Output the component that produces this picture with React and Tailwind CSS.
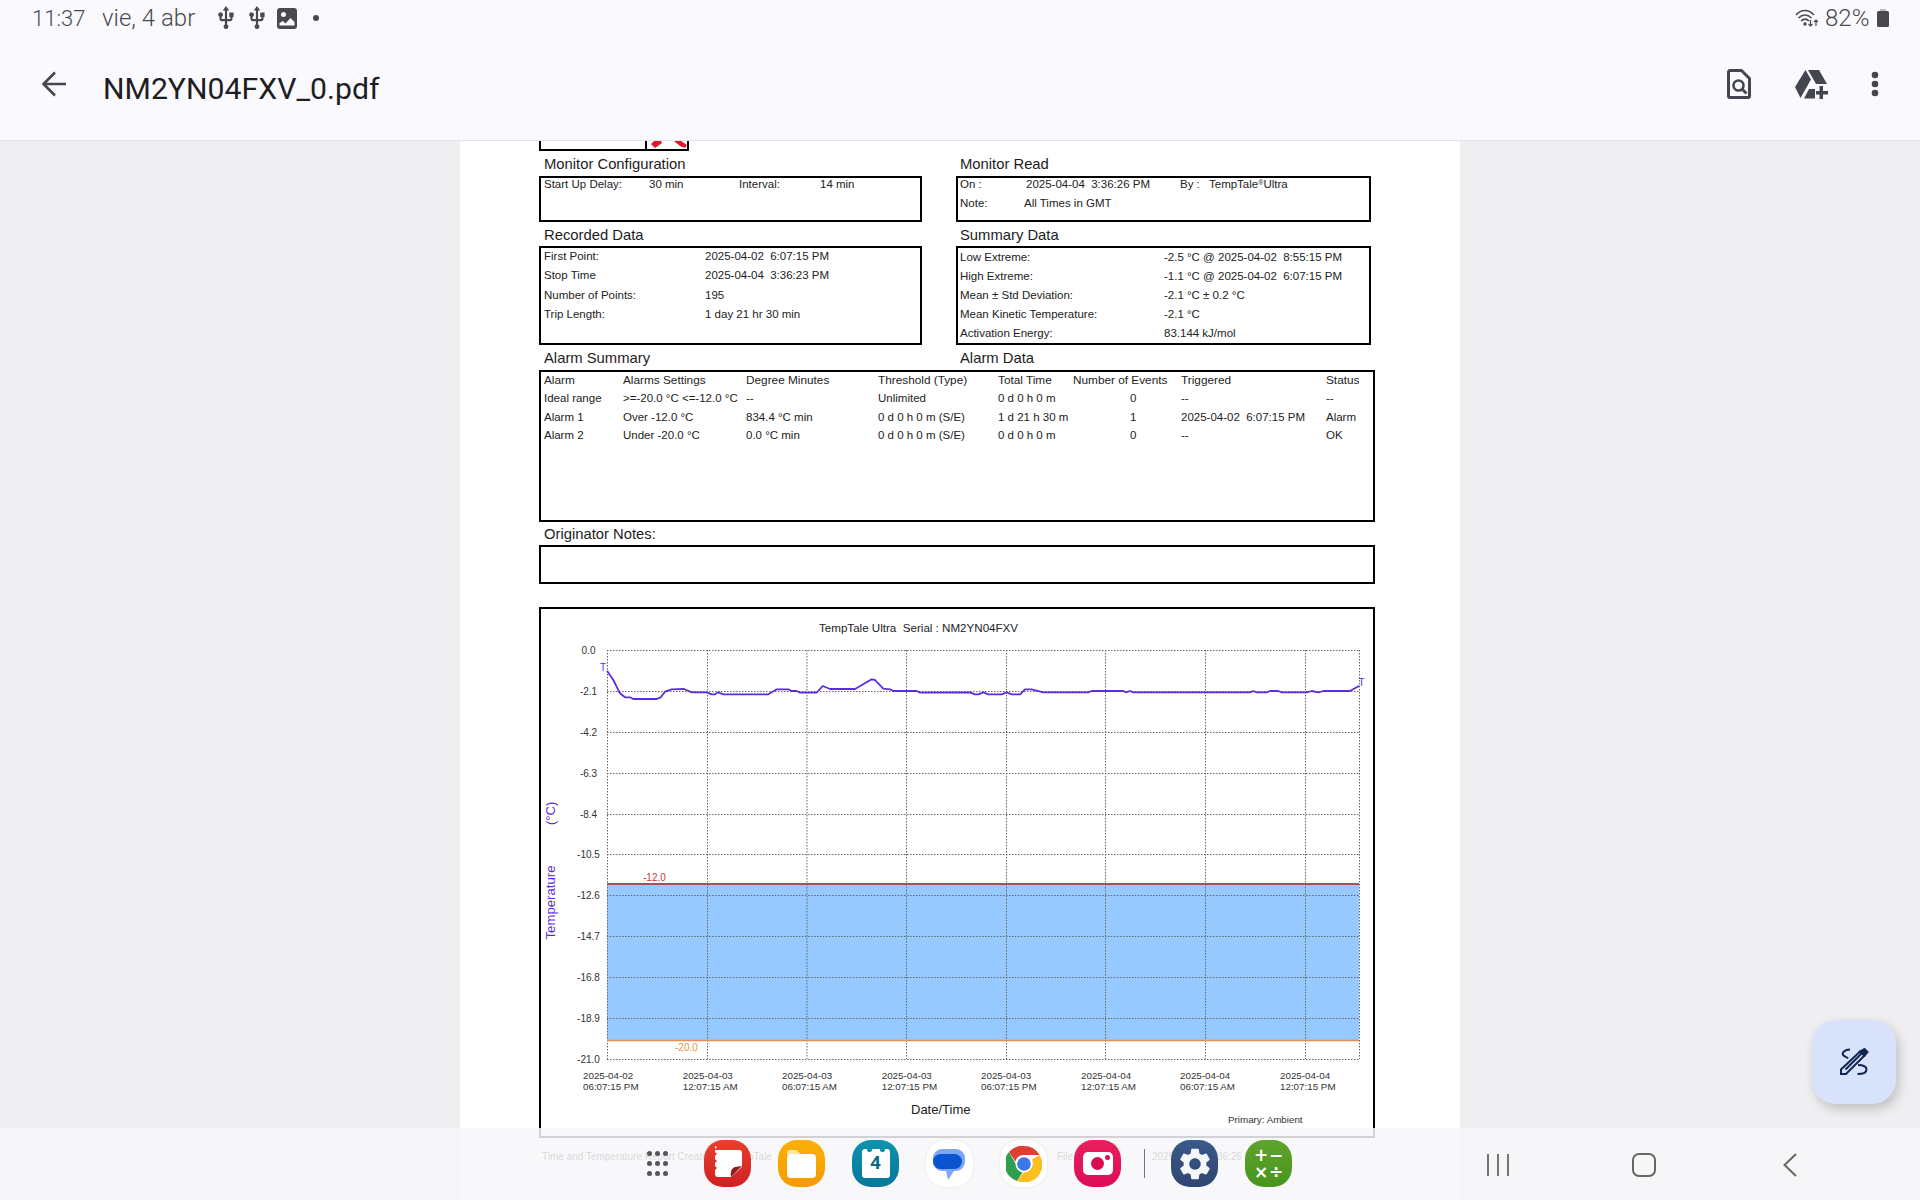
import React from "react";
import { MdUsb, MdSettings } from "react-icons/md";

const hLines = [
  ["0.0", 650],
  ["-2.1", 691],
  ["-4.2", 732],
  ["-6.3", 773],
  ["-8.4", 814],
  ["-10.5", 854],
  ["-12.6", 895],
  ["-14.7", 936],
  ["-16.8", 977],
  ["-18.9", 1018],
  ["-21.0", 1059],
];

const vLines = [607, 707, 806.5, 906, 1006, 1105, 1205, 1305, 1359];

const xLabels = [
  [583, "2025-04-02", "06:07:15 PM"],
  [682.7, "2025-04-03", "12:07:15 AM"],
  [782, "2025-04-03", "06:07:15 AM"],
  [881.7, "2025-04-03", "12:07:15 PM"],
  [981, "2025-04-03", "06:07:15 PM"],
  [1081, "2025-04-04", "12:07:15 AM"],
  [1180, "2025-04-04", "06:07:15 AM"],
  [1280, "2025-04-04", "12:07:15 PM"],
];

const curve =
  "607,670.7 613.3,680 620,693.3 625,697.3 630,697.3 633.3,699 656.7,699 660.7,697.3 665,691.7 671.7,689.3 684,689 691.7,692.3 706.7,692.3 711.7,694.3 715,694.3 718.3,692.3 723.3,694.3 768.3,694.3 776.7,689.3 788.3,689.3 791.7,691 796.7,691 800,692.7 816.7,692.7 822.7,686 830,689 855,689 871.7,679.3 875,680 883.3,688.7 890,689.3 893.3,691 916.7,691 920,692.7 970,692.3 975,694.3 978.3,694.3 983.3,692.3 988.3,694.3 1001.7,694.3 1006.7,692.3 1011.7,694.3 1020,694.3 1025,689.3 1031.7,689.3 1043.3,692.3 1088.3,692.3 1091.7,691 1123.3,691 1126,692.3 1130,691 1133.3,692.3 1250,692.3 1253.3,691 1256.7,692.3 1266.7,692.3 1270,691 1278.3,691 1281.7,692.3 1306.7,692.3 1311.7,691 1318.3,692.3 1323.3,691 1350,691 1359.3,685.7";

const alarmRows = [
  ["Alarm", "Alarms Settings", "Degree Minutes", "Threshold (Type)", "Total Time", "Number of Events", "Triggered", "Status"],
  ["Ideal range", ">=-20.0 °C <=-12.0 °C", "--", "Unlimited", "0 d 0 h 0 m", "0", "--", "--"],
  ["Alarm 1", "Over -12.0 °C", "834.4 °C min", "0 d 0 h 0 m (S/E)", "1 d 21 h 30 m", "1", "2025-04-02  6:07:15 PM", "Alarm"],
  ["Alarm 2", "Under -20.0 °C", "0.0 °C min", "0 d 0 h 0 m (S/E)", "0 d 0 h 0 m", "0", "--", "OK"],
];

const Row = ({ children, className = "" }) => (
  <div className={`h-[12px] leading-[12px] flex whitespace-pre ${className}`}>{children}</div>
);

const Heading = ({ children, className = "" }) => (
  <div className={`pt-[2px] flex items-center text-[14.8px] text-[#1c1c1c] ${className}`}>{children}</div>
);

const TempChart = () => (
  <svg viewBox="542 609 830 527" className="w-[830px] h-[527px]">
    <rect x="607" y="884" width="752" height="156" fill="#96c9ff" />
    {hLines.map(([label, y]) => (
      <g key={label}>
        <line x1="607" x2="1359" y1={y + 0.5} y2={y + 0.5} stroke="#666" strokeWidth="1" strokeDasharray="1.5 1.5" />
        <text x="588.5" y={y + 4} textAnchor="middle" fontSize="10" fill="#333">
          {label}
        </text>
      </g>
    ))}
    {vLines.map((x) => (
      <line key={x} x1={x + 0.5} x2={x + 0.5} y1="650" y2="1059" stroke="#666" strokeWidth="1" strokeDasharray="1.5 1.5" />
    ))}
    <line x1="607" x2="1359" y1="884" y2="884" stroke="#a4505f" strokeWidth="2" />
    <line x1="607" x2="1359" y1="1040.5" y2="1040.5" stroke="#ee8a4c" strokeWidth="1.5" />
    <text x="643" y="881" fontSize="10" fill="#c8333f">-12.0</text>
    <text x="675" y="1051" fontSize="10" fill="#f0913f">-20.0</text>
    <polyline points={curve} fill="none" stroke="#5b2de0" strokeWidth="1.8" strokeLinejoin="round" />
    <text x="600" y="671" fontSize="10" fill="#5b2de0">T</text>
    <text x="1358.5" y="686" fontSize="10" fill="#5b2de0">T</text>
    <text x="819" y="632" fontSize="11.6" fill="#222" className="whitespace-pre">
      TempTale Ultra  Serial : NM2YN04FXV
    </text>
    <text transform="translate(555 939.5) rotate(-90)" fontSize="13.2" fill="#5b2de0">Temperature</text>
    <text transform="translate(555 825) rotate(-90)" fontSize="13" fill="#5b2de0">(°C)</text>
    {xLabels.map(([x, date, time]) => (
      <g key={x} fontSize="9.8" fill="#333">
        <text x={x} y="1079">{date}</text>
        <text x={x} y="1090">{time}</text>
      </g>
    ))}
    <text x="911" y="1114" fontSize="13" fill="#222">Date/Time</text>
    <text x="1228" y="1122.5" fontSize="9.8" fill="#333">Primary: Ambient</text>
  </svg>
);

const PdfPage = () => (
  <div className="w-[1000px] mx-auto flex-1 bg-white overflow-hidden pl-[79px] font-['Liberation_Sans',Arial,sans-serif] text-[11.5px] text-[#222]">
    <div className="flex h-[10px]">
      <div className="w-[108px] border-2 border-t-0 border-black" />
      <div className="w-[42px] border-2 border-t-0 border-l-0 border-black overflow-hidden">
        <svg viewBox="0 0 40 8" className="w-[40px] h-[8px]">
          <polygon points="4,3 8,7 15,2 14,0 7,0" fill="#e3172a" />
          <polygon points="27,0 34,0 40,4 38,7 33,5" fill="#e3172a" />
        </svg>
      </div>
    </div>

    <div className="grid grid-cols-[383px_415px] gap-x-[34px]">
      <Heading className="h-[25px] pl-[5px]">Monitor Configuration</Heading>
      <Heading className="h-[25px] pl-[4px]">Monitor Read</Heading>
      <div className="h-[46px] border-2 border-black pl-[3px] flex flex-col gap-[7px]">
        <Row>
          <span className="w-[105px]">Start Up Delay:</span>
          <span className="w-[90px]">30 min</span>
          <span className="w-[81px]">Interval:</span>
          <span>14 min</span>
        </Row>
      </div>
      <div className="h-[46px] border-2 border-black pl-[2px] flex flex-col gap-[7px]">
        <Row>
          <span className="w-[66px]">On :</span>
          <span className="w-[154px]">2025-04-04  3:36:26 PM</span>
          <span className="w-[29px]">By :</span>
          <span>
            TempTale<sup className="text-[7px]">®</sup>Ultra
          </span>
        </Row>
        <Row>
          <span className="w-[64px]">Note:</span>
          <span>All Times in GMT</span>
        </Row>
      </div>

      <Heading className="h-[24px] pl-[5px]">Recorded Data</Heading>
      <Heading className="h-[24px] pl-[4px]">Summary Data</Heading>
      <div className="h-[99px] border-2 border-black pl-[3px] pt-[2px] flex flex-col gap-[7.33px]">
        {[
          ["First Point:", "2025-04-02  6:07:15 PM"],
          ["Stop Time", "2025-04-04  3:36:23 PM"],
          ["Number of Points:", "195"],
          ["Trip Length:", "1 day 21 hr 30 min"],
        ].map(([label, value]) => (
          <Row key={label}>
            <span className="w-[161px]">{label}</span>
            <span>{value}</span>
          </Row>
        ))}
      </div>
      <div className="h-[99px] border-2 border-black pl-[2px] pt-[3px] flex flex-col gap-[7px]">
        {[
          ["Low Extreme:", "-2.5 °C @ 2025-04-02  8:55:15 PM"],
          ["High Extreme:", "-1.1 °C @ 2025-04-02  6:07:15 PM"],
          ["Mean ± Std Deviation:", "-2.1 °C ± 0.2 °C"],
          ["Mean Kinetic Temperature:", "-2.1 °C"],
          ["Activation Energy:", "83.144 kJ/mol"],
        ].map(([label, value]) => (
          <Row key={label}>
            <span className="w-[204px]">{label}</span>
            <span>{value}</span>
          </Row>
        ))}
      </div>
    </div>

    <div className="flex h-[25px]">
      <Heading className="w-[416px] pl-[5px]">Alarm Summary</Heading>
      <Heading className="pl-[5px]">Alarm Data</Heading>
    </div>
    <div className="w-[836px] h-[152px] border-2 border-black pl-[3px] pt-[2px] grid grid-cols-[79px_123px_132px_120px_75px_108px_145px_1fr] auto-rows-[12px] gap-y-[6.4px]">
      {alarmRows.map((row, r) =>
        row.map((cell, c) => (
          <div
            key={`${r}-${c}`}
            className={`leading-[12px] whitespace-pre ${r === 0 ? "text-[11.8px]" : "text-[11.5px]"} ${c === 5 && r > 0 ? "pl-[57px]" : ""}`}
          >
            {cell}
          </div>
        ))
      )}
    </div>

    <Heading className="h-[23px] pl-[5px]">Originator Notes:</Heading>
    <div className="w-[836px] h-[39px] border-2 border-black" />

    <div className="w-[836px] h-[531px] mt-[23px] border-2 border-black pl-px">
      <TempChart />
    </div>

    <div className="ml-[3px] mt-[13px] h-[12px] flex text-[10px] leading-[12px] text-[#222] whitespace-pre">
      <span className="w-[515px]">Time and Temperature Report Created by TempTale</span>
      <span className="w-[95px]">File</span>
      <span>2025-04-04  3:36:26 PM</span>
    </div>
  </div>
);

const Header = () => (
  <div className="h-[141px] shrink-0 bg-[#f9f9fe] border-b border-[#e3e3e6] z-10 font-['Roboto',sans-serif]">
    <div className="h-[36px] flex items-center justify-between pl-[32px] pr-[31px] font-light text-[#4a4a4e]">
      <div className="flex items-center">
        <span className="w-[70px] text-[22px]">11:37</span>
        <span className="w-[111px] text-[24px]">vie, 4 abr</span>
        <MdUsb className="w-[26px] h-[26px] text-[#4a4a4e] mr-[5px]" />
        <MdUsb className="w-[26px] h-[26px] text-[#4a4a4e] mr-[7px]" />
        <svg viewBox="0 0 20 21" className="w-[20px] h-[21px] mr-[16px]">
          <path
            fillRule="evenodd"
            d="M3 0h14a3 3 0 0 1 3 3v15a3 3 0 0 1-3 3H3a3 3 0 0 1-3-3V3a3 3 0 0 1 3-3zM2.5 15v2.5h15V14l-4-4-5 5.5-2.5-2.5zM6.5 4a2.5 2.5 0 1 0 0 5 2.5 2.5 0 0 0 0-5z"
            fill="#4a4a4e"
          />
        </svg>
        <span className="w-[6px] h-[6px] rounded-full bg-[#4a4a4e]" />
      </div>
      <div className="flex items-center">
        <svg viewBox="0 0 24 18" className="w-[24px] h-[18px] mr-[6px]" fill="none" stroke="#4a4a4e" strokeWidth="1.5">
          <path d="M1 6c5-6 13-6 18 0" />
          <path d="M3.5 9c4-4 9-4 13 0" />
          <path d="M6 12c2.500-2.500 5.500-2.500 8 0" />
          <circle cx="10" cy="15" r="1" fill="#4a4a4e" />
          <path d="M15.500 11v6M13.500 15l2 2 2-2" strokeWidth="1.2" />
          <path d="M21 17v-6M19 13l2-2 2 2" strokeWidth="1.2" />
        </svg>
        <span className="w-[52px] text-[24px]">82%</span>
        <svg viewBox="0 0 12 18" className="w-[12px] h-[18px]">
          <rect x="3" y="0" width="6" height="3" fill="#bdbdc0" />
          <rect x="0" y="2" width="12" height="16" rx="1.500" fill="#4a4a4e" />
        </svg>
      </div>
    </div>
    <div className="h-[96px] flex items-center pl-[41px] pr-[38px]">
      <svg viewBox="0 0 26 26" className="w-[26px] h-[26px] mr-[36px]" fill="none" stroke="#45464f" strokeWidth="2.6">
        <path d="M25 13H3M14 1.500 2.500 13 14 24.500" />
      </svg>
      <span className="text-[30.2px] text-[#1e1e22] flex-1 pt-[9px]">NM2YN04FXV_0.pdf</span>
      <svg viewBox="0 0 24 30" className="w-[24px] h-[30px] mr-[44px]" fill="none" stroke="#44464f">
        <path d="M3 1.500h11.500L22.500 9.500V27a1.500 1.500 0 0 1-1.500 1.500H3A1.500 1.500 0 0 1 1.500 27V3A1.500 1.500 0 0 1 3 1.500z" strokeWidth="3" strokeLinejoin="round" />
        <circle cx="11.500" cy="16.500" r="5" strokeWidth="2.600" />
        <path d="M15 20l4.500 4.500" strokeWidth="2.800" />
      </svg>
      <svg viewBox="0 0 33 29" className="w-[33px] h-[29px] mr-[43px]" fill="#44464f">
        <path d="M0 17 10.500 0l5.500 9.500L5.500 28z" />
        <path d="M13 0h11l8 14H21z" />
        <path d="M9 28.500 14 19h6v9.500z" />
        <path d="M24.500 16h3.500v5h5v3.500h-5v4.500h-3.500v-4.500h-3.500V21h3.500z" />
      </svg>
      <svg viewBox="0 0 8 26" className="w-[8px] h-[26px] mr-[3px]" fill="#44464f">
        <circle cx="4" cy="4" r="3.300" />
        <circle cx="4" cy="13" r="3.300" />
        <circle cx="4" cy="22" r="3.300" />
      </svg>
    </div>
  </div>
);

const Squircle = ({ className = "", children }) => (
  <div className={`w-[47px] h-[47px] rounded-[19px] shrink-0 flex items-center justify-center ${className}`}>
    {children}
  </div>
);

const Dock = () => (
  <div className="absolute inset-x-0 bottom-0 h-[72px] bg-[#f7f7f9]/85 pt-[12px] flex items-start">
    <div className="ml-[645px] w-[25px] h-[47px] mr-[34px] grid grid-cols-3 content-center justify-items-center gap-y-[5px]">
      {[...Array(9)].map((_, i) => (
        <span key={i} className="w-[5px] h-[5px] rounded-full bg-[#555558]" />
      ))}
    </div>
    <div className="flex items-center gap-[27px]">
      <Squircle className="bg-linear-to-b from-[#e8402b] to-[#cf1f24]">
        <svg viewBox="0 0 47 47" className="w-[47px] h-[47px]">
          <path d="M11 10h24a3 3 0 0 1 3 3v14l-11 10H14a3 3 0 0 1-3-3v-4l2-2-2-2v-3l2-2-2-2v-3l2-2-2-2v-3l2-2-2-1z" fill="#fff" />
          <path d="M38 26 27 37c-1-6 1-9 4-10z" fill="#8f1d1f" />
        </svg>
      </Squircle>
      <Squircle className="bg-linear-to-b from-[#f9b106] to-[#f59a00]">
        <svg viewBox="0 0 47 47" className="w-[47px] h-[47px]">
          <path d="M9 13a3 3 0 0 1 3-3h7l4 5h-14z" fill="#fde3a4" />
          <rect x="9" y="14" width="29" height="24" rx="4" fill="#fff" />
        </svg>
      </Squircle>
      <Squircle className="bg-linear-to-b from-[#0f93ad] to-[#07779a]">
        <div className="relative w-[28px] h-[29px] bg-white rounded-[3px] flex items-center justify-center text-[19px] font-bold text-[#0c6a85] font-['Roboto',sans-serif]">
          4
          <span className="absolute -top-px left-[5px] w-[5px] h-[4px] rounded-b-[2px] bg-[#0f93ad]" />
          <span className="absolute -top-px right-[5px] w-[5px] h-[4px] rounded-b-[2px] bg-[#0f93ad]" />
        </div>
      </Squircle>
      <Squircle className="bg-white shadow-[0_0_2px_#d8d8dc]">
        <svg viewBox="0 0 47 47" className="w-[47px] h-[47px]">
          <path d="M16 9h14a9 9 0 0 1 9 9v4a9 9 0 0 1-9 9h-2l-6 9-2-9h-4a9 9 0 0 1-9-9v-4a9 9 0 0 1 9-9z" fill="#7ea6f7" />
          <rect x="7" y="14" width="29" height="15" rx="7.500" fill="#0a55cf" />
        </svg>
      </Squircle>
      <Squircle className="bg-white shadow-[0_0_2px_#d8d8dc]">
        <svg viewBox="0 0 36 36" className="w-[36px] h-[36px]">
          <path d="M18 0a18 18 0 0 1 15.600 9H18a9 9 0 0 0-8.600 6.500L3 6a18 18 0 0 1 15-6z" fill="#dd4032" />
          <path d="M3 6l8 14a8 8 0 0 0 5.500 6.500L11 35A18 18 0 0 1 3 6z" fill="#2f9e4f" />
          <path d="M33.600 9A18 18 0 0 1 11 35l7-9a9 9 0 0 0 8-12.500z" fill="#fbc020" />
          <circle cx="18" cy="18" r="8.500" fill="#fff" />
          <circle cx="18" cy="18" r="6.800" fill="#3a78e8" />
        </svg>
      </Squircle>
      <Squircle className="bg-linear-to-b from-[#e91e5c] to-[#dc0b58]">
        <div className="relative w-[30px] h-[23px] bg-white rounded-[5px] flex items-center justify-center">
          <span className="w-[13px] h-[13px] rounded-full bg-[#d80d54]" />
          <span className="absolute top-[3px] right-[3px] w-[5px] h-[5px] rounded-full bg-[#d80d54]" />
        </div>
      </Squircle>
    </div>
    <div className="w-px h-[29px] mt-[9px] ml-[23px] mr-[26px] bg-[#77777a]" />
    <div className="flex items-center gap-[27px]">
      <Squircle className="bg-linear-to-b from-[#3a5a8a] to-[#2e4570]">
        <MdSettings className="w-[38px] h-[38px] text-[#f5f6f8]" />
      </Squircle>
      <Squircle className="bg-linear-to-b from-[#5fa32d] to-[#47951e]">
        <div className="grid grid-cols-2 text-white text-[17px] leading-[17px] font-bold text-center w-[30px] font-['DejaVu_Sans',sans-serif]">
          <span>+</span>
          <span>−</span>
          <span>×</span>
          <span>÷</span>
        </div>
      </Squircle>
    </div>
    <svg viewBox="0 0 22 24" className="w-[22px] h-[24px] ml-[195px] mt-[13px]" stroke="#666" strokeWidth="1.800" fill="none">
      <path d="M1 1v22M11 1v22M21 1v22" />
    </svg>
    <div className="w-[24px] h-[24px] ml-[123px] mt-[13px] rounded-[7px] border-2 border-[#666]" />
    <svg viewBox="0 0 14 24" className="w-[14px] h-[24px] ml-[127px] mt-[13px]" stroke="#666" strokeWidth="2" fill="none">
      <path d="M13 1 1.500 12 13 23" />
    </svg>
  </div>
);

const App = () => {
  return (
    <div className="relative w-[1920px] h-[1200px] overflow-hidden bg-[#efeff1] flex flex-col">
      <Header />
      <PdfPage />
      <Dock />
      <button className="absolute right-[24px] top-[1020px] w-[84px] h-[84px] rounded-[24px] bg-[#d8e2fa] shadow-[3px_5px_12px_rgba(0,0,0,0.2)] flex items-center justify-center">
        <svg viewBox="0 0 30 28" className="w-[30px] h-[28px]" fill="none" stroke="#0f2550" strokeWidth="2">
          <path d="M2 26v-4.500L21 3.500l4.500 4L7 26z" />
          <path d="M6.500 21.500 23 5" />
          <path d="M21 3.500 25.500 1l3 3-3 3.500z" fill="#0f2550" />
          <path d="M11 1.500C6 1.500 2 5 4.500 7.500 6 9 8 9 9 10.500" />
          <path d="M19 17c4 0 8.500 1 8.500 4.500S23 26 18.500 26" />
        </svg>
      </button>
    </div>
  );
};

export default App;
